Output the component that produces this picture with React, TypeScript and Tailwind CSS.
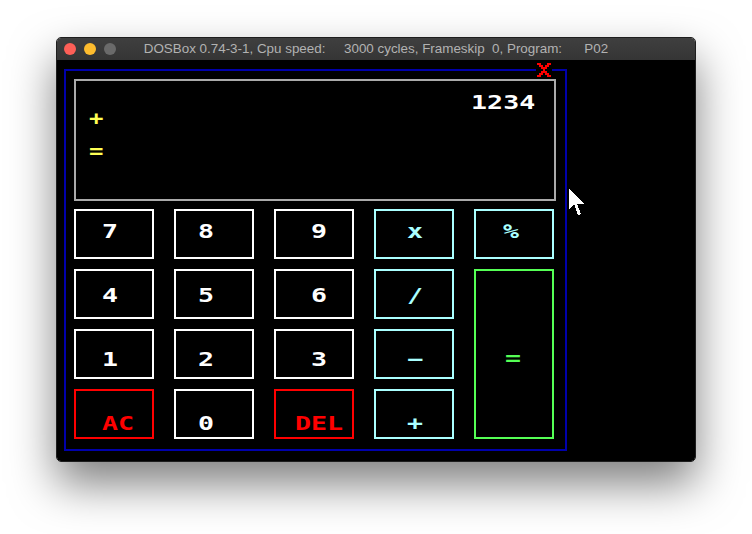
import React from 'react';

const mono = "font-['DejaVu_Sans_Mono',monospace] font-bold text-[20px] leading-[20px] whitespace-pre";

type Key = {
  label: string;
  color: string;
  pad: string;
  span?: string;
};

const keys: Key[] = [
  { label: '7', color: 'border-white text-white', pad: 'pl-[26px] pt-[10px]' },
  { label: '8', color: 'border-white text-white', pad: 'pl-[22px] pt-[10px]' },
  { label: '9', color: 'border-white text-white', pad: 'pl-[35px] pt-[10px]' },
  { label: 'x', color: 'border-[#aaffff] text-[#aaffff]', pad: 'pl-[31px] pt-[10px]' },
  { label: '%', color: 'border-[#aaffff] text-[#aaffff]', pad: 'pl-[27px] pt-[10px]' },
  { label: '4', color: 'border-white text-white', pad: 'pl-[26px] pt-[14px]' },
  { label: '5', color: 'border-white text-white', pad: 'pl-[22px] pt-[14px]' },
  { label: '6', color: 'border-white text-white', pad: 'pl-[35px] pt-[14px]' },
  { label: '/', color: 'border-[#aaffff] text-[#aaffff]', pad: 'pl-[31px] pt-[14px]' },
  {
    label: '=',
    color: 'border-[#55ff55] text-[#55ff55]',
    pad: 'pl-[29px] pt-[77px]',
    span: 'row-span-3',
  },
  { label: '1', color: 'border-white text-white', pad: 'pl-[26px] pt-[18px]' },
  { label: '2', color: 'border-white text-white', pad: 'pl-[22px] pt-[18px]' },
  { label: '3', color: 'border-white text-white', pad: 'pl-[35px] pt-[18px]' },
  { label: '\u2212', color: 'border-[#aaffff] text-[#aaffff]', pad: 'pl-[31px] pt-[18px]' },
  { label: 'AC', color: 'border-[#ff0000] text-[#ff0000]', pad: 'pl-[26px] pt-[22px]' },
  { label: '0', color: 'border-white text-white', pad: 'pl-[22px] pt-[22px]' },
  { label: 'DEL', color: 'border-[#ff0000] text-[#ff0000]', pad: 'pl-[19px] pt-[22px]' },
  { label: '+', color: 'border-[#aaffff] text-[#aaffff]', pad: 'pl-[31px] pt-[22px]' },
];

const xPixels = [
  '1100011',
  '0110110',
  '0011100',
  '0001000',
  '0011100',
  '0110110',
  '1100011',
];

const CloseX = () => (
  <svg width="14" height="14" viewBox="0 0 14 14" shapeRendering="crispEdges">
    {xPixels.map((row, y) =>
      row.split('').map((p, x) =>
        p === '1' ? (
          <rect key={`${x}-${y}`} x={x * 2} y={y * 2} width="2" height="2" fill="#ff0000" />
        ) : null
      )
    )}
  </svg>
);

const Cursor = () => (
  <svg width="17" height="29" viewBox="0 0 17 29" shapeRendering="crispEdges">
    <polygon points="0,0 0,21 5,16 9,27 12,26 8,16 15,16" fill="#ffffff" />
  </svg>
);

export default function App() {
  return (
    <div className="h-[534px] w-[752px] bg-white pl-[56px] pt-[37px]">
      <div className="w-[640px] overflow-hidden rounded-[5px] border border-[#1e1e1e] shadow-[0_22px_45px_rgba(0,0,0,0.5)]">
        <div className="flex h-[22px] items-center bg-gradient-to-b from-[#3f3f3f] to-[#353535]">
          <div className="flex w-[64px] items-center gap-[8px] pl-[7px]">
            <span className="size-[12px] rounded-full bg-[#fe5f57]" />
            <span className="size-[12px] rounded-full bg-[#febc2e]" />
            <span className="size-[12px] rounded-full bg-[#6a6a6a]" />
          </div>
          <div className="flex-1 whitespace-pre text-center font-['Liberation_Sans',sans-serif] text-[13.4px] text-[#b2b2b2]">
            DOSBox 0.74-3-1, Cpu speed:     3000 cycles, Frameskip  0, Program:      P02
          </div>
          <div className="w-[64px]" />
        </div>

        <div className="relative h-[401px] bg-black pl-[7px] pt-[9px]">
          <div className="h-[382px] w-[503px] border-2 border-[#0000aa] p-[8px]">
            <div className={`flex h-[122px] w-[482px] flex-col border-2 border-[#aaaaaa] ${mono}`}>
              <div className="mt-[11px] flex justify-end pr-[19px] text-white">
                <span className="inline-block origin-right scale-x-[1.33]">1234</span>
              </div>
              <div className="-mt-[4px] pl-[13px] text-[#ffff55]">
                <span className="inline-block origin-left scale-x-[1.2]">+</span>
              </div>
              <div className="mt-[13px] pl-[13px] text-[#ffff55]">
                <span className="inline-block origin-left scale-x-[1.2]">=</span>
              </div>
            </div>

            <div className="mt-[8px] grid grid-cols-[repeat(5,80px)] grid-rows-[repeat(4,50px)] gap-x-[20px] gap-y-[10px]">
              {keys.map((key, index) => (
                <button
                  key={index}
                  className={`flex items-start border-2 text-left ${key.color} ${key.pad} ${key.span ?? ''} ${mono}`}
                >
                  <span className="inline-block origin-left scale-x-[1.33]">{key.label}</span>
                </button>
              ))}
            </div>
          </div>

          <div className="absolute left-[479px] top-[3px] bg-black px-[1px]">
            <CloseX />
          </div>

          <div className="absolute left-[512px] top-[128px]">
            <Cursor />
          </div>
        </div>
      </div>
    </div>
  );
}
